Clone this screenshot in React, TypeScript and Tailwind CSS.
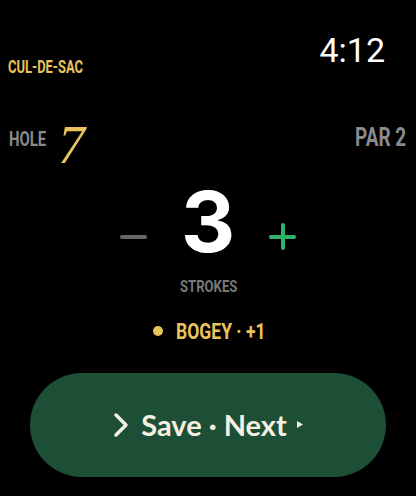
import React, { useState } from 'react';

const cond = { fontFamily: 'Roboto, "DejaVu Sans", sans-serif' };

export default function App() {
  const [strokes, setStrokes] = useState(3);
  const par = 2;
  const diff = strokes - par;

  return (
    <div className="w-[416px] h-[496px] bg-black flex flex-col overflow-hidden select-none leading-none">
      {/* Header: course + clock */}
      <div className="flex justify-between items-start pt-[33px] pl-[8px] pr-[31px]">
        <div className="w-[74px] mt-[25px]">
          <span className="block origin-left scale-x-[0.72] whitespace-nowrap text-[18px] font-bold leading-none text-[#e9c35c]" style={cond}>
            CUL-DE-SAC
          </span>
        </div>
        <span className="block text-[34px] leading-none text-white" style={{ fontFamily: 'Roboto, sans-serif' }}>
          4:12
        </span>
      </div>

      {/* Hole / par */}
      <div className="flex justify-between items-start pl-[9px] pr-[9px]">
        <div className="flex items-start">
          <div className="w-[37px] mt-[53px]">
            <span className="block origin-left scale-x-[0.71] whitespace-nowrap text-[21px] font-bold leading-none text-[#8a8a8a]" style={cond}>
              HOLE
            </span>
          </div>
          <span className="block ml-[12px] mt-[42px] text-[54px] italic leading-none text-[#e9c35c]" style={{ fontFamily: '"Liberation Serif", serif' }}>
            7
          </span>
        </div>
        <div className="w-[52px] mt-[49px]">
          <span className="block origin-left scale-x-[0.76] whitespace-nowrap text-[25px] font-bold leading-none text-[#8a8a8a]" style={cond}>
            PAR 2
          </span>
        </div>
      </div>

      {/* Stroke counter */}
      <div className="flex justify-center items-start gap-[33px] mt-[8px]">
        <button onClick={() => setStrokes(s => Math.max(1, s - 1))} className="mt-[55px] w-[27px] h-[4px]">
          <span className="block w-[27px] h-[4px] rounded-full bg-[#666666]" />
        </button>
        <span className="block w-[56px] text-center text-[84px] font-bold leading-none text-white" style={{ fontFamily: 'Inter, sans-serif' }}>
          {strokes}
        </span>
        <button onClick={() => setStrokes(s => s + 1)} className="mt-[43px] w-[27px] h-[27px] relative">
          <span className="absolute left-0 top-[11.5px] w-[27px] h-[4px] rounded-full bg-[#2db46a]" />
          <span className="absolute top-0 left-[11.5px] w-[4px] h-[27px] rounded-full bg-[#2db46a]" />
        </button>
      </div>

      <div className="w-[57px] mx-auto mt-[14px]">
        <span className="block origin-left scale-x-[0.77] whitespace-nowrap text-[17px] font-bold leading-none text-[#777777]" style={cond}>
          STROKES
        </span>
      </div>

      <div className="flex justify-center items-center gap-[13px] mt-[25px]">
        <span className="w-[10px] h-[10px] rounded-full bg-[#e9c35c]" />
        <div className="w-[88px]">
          <span className="block origin-left scale-x-[0.78] whitespace-nowrap text-[22.5px] font-bold leading-none text-[#e9c35c]" style={cond}>
            BOGEY · {diff > 0 ? `+${diff}` : diff}
          </span>
        </div>
      </div>

      {/* Save button */}
      <button className="mt-[30px] mx-[30px] h-[104px] rounded-full bg-[#1c4f35] flex items-center justify-center text-[#f5f0e1]">
        <svg width="16" height="26" viewBox="0 0 16 26" fill="none">
          <path d="M3 3 L13 13 L3 23" stroke="currentColor" strokeWidth="3.5" strokeLinecap="round" strokeLinejoin="round" />
        </svg>
        <span className="ml-[12px] text-[29px] font-bold leading-none" style={{ fontFamily: 'Lato, sans-serif' }}>
          Save · Next
        </span>
        <svg className="ml-[10px]" width="6" height="7" viewBox="0 0 6 7">
          <path d="M0 0 L6 3.5 L0 7 Z" fill="currentColor" />
        </svg>
      </button>
    </div>
  );
}
